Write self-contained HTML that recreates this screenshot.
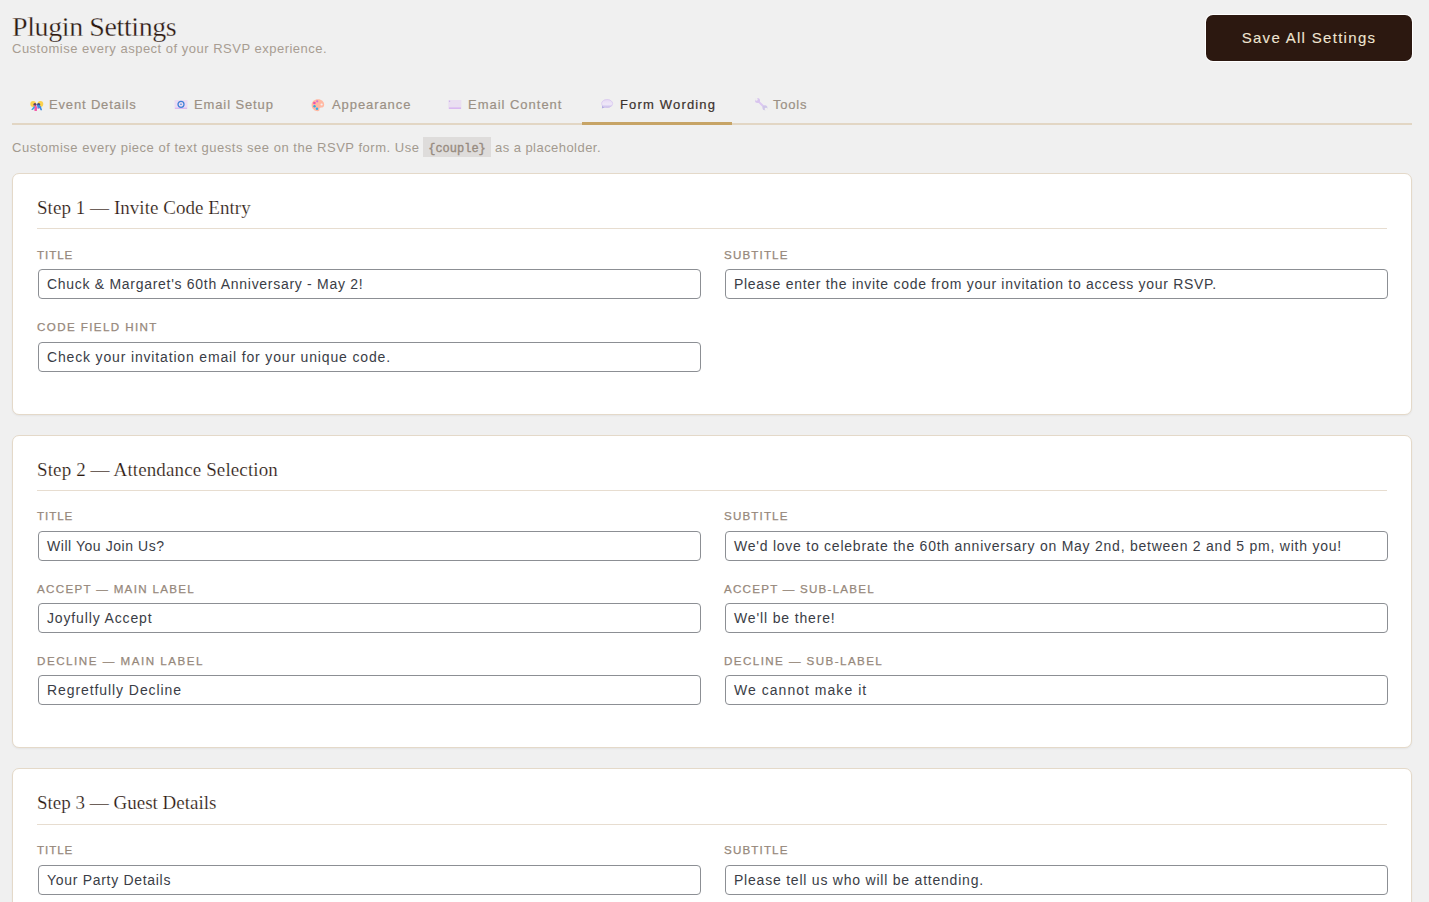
<!DOCTYPE html>
<html><head><meta charset="utf-8">
<style>
*{box-sizing:border-box;margin:0;padding:0}
html,body{width:1429px;height:902px;overflow:hidden;background:#f0f0f0}
body{font-family:"Liberation Sans",sans-serif;position:relative}
.a{position:absolute;white-space:nowrap}
.h1{left:12px;top:10px;font-family:"Liberation Serif",serif;font-size:28px;line-height:34px;color:#2c1810;letter-spacing:-0.4px;-webkit-text-stroke:0.3px #f0f0f0}
.sub{left:12px;top:41px;font-size:13px;line-height:16px;color:#a89d92;letter-spacing:0.5px}
.btn{left:1206px;top:15px;width:206px;height:46px;border-radius:7px;background:#2c1810;color:#efe4d2;font-size:15px;letter-spacing:1.3px;line-height:46px;text-align:center;box-shadow:0 0 0 1px #fff;-webkit-text-stroke:0.1px #efe4d2}
.tabline{left:12px;top:123px;width:1400px;height:2px;background:#e2d6c4}
.active{left:582px;top:122px;width:150px;height:3px;background:#c7a466}
.tt{top:97px;font-size:13px;line-height:16px;color:#9b9085;-webkit-text-stroke:0.2px #9b9085}
.tt.on{color:#3b322d;-webkit-text-stroke:0.2px #3b322d}
.ic{position:absolute}
.desc{left:12px;top:140px;font-size:13px;line-height:16px;color:#a39a8f;letter-spacing:0.515px}
.code{left:423px;top:137px;width:68px;height:20px;background:#dedcdb;font-family:"Liberation Mono",monospace;font-size:12px;line-height:20px;padding-top:2px;color:#978b7f;text-align:center;-webkit-text-stroke:0.35px #978b7f}
.card{position:absolute;left:12px;width:1400px;background:#fff;border:1px solid #e4d9c9;border-radius:7px;box-shadow:0 1px 2px rgba(0,0,0,0.05)}
.ct{position:absolute;left:24px;font-family:"Liberation Serif",serif;font-size:19px;line-height:24px;color:#2c1810;white-space:nowrap;-webkit-text-stroke:0.2px #fff}
.sep{position:absolute;left:24px;width:1350px;height:1px;background:#e7ddd0}
.lbl{position:absolute;font-size:11.6px;line-height:14px;color:#96887b;white-space:nowrap;-webkit-text-stroke:0.25px #96887b}
.inp{position:absolute;width:663px;height:30px;border:1px solid #8c8f94;border-radius:4px;font-size:14px;line-height:28px;padding-left:8px;color:#3a3d46;white-space:nowrap;overflow:hidden;-webkit-text-stroke:0px #3c434a}
.L{left:24px}.R{left:711px}
.iL{left:25px}.iR{left:712px}
</style></head><body>
<div class="a h1">Plugin Settings</div>
<div class="a sub">Customise every aspect of your RSVP experience.</div>
<div class="a btn">Save All Settings</div>

<div class="a tabline"></div>
<div class="a active"></div>

<!-- icons -->
<svg class="ic" style="left:30px;top:100px" width="14" height="12" viewBox="0 0 14 12">
 <circle cx="3.2" cy="4" r="2.9" fill="#fbd24e"/>
 <circle cx="10.4" cy="4" r="2.9" fill="#fbd24e"/>
 <circle cx="5" cy="4.6" r="1.6" fill="#5a3e62"/>
 <circle cx="8.6" cy="4.6" r="1.6" fill="#3b4a82"/>
 <path d="M4 5.2 Q6.4 4.8 7.1 7 L6.9 11 L4.5 11 Z" fill="#f25aa8"/>
 <path d="M4 6 L1.2 9.8 L2.9 10 L5 7.6 Z" fill="#3aa2e6"/>
 <path d="M7 5 Q9.6 4.4 11 6.4 L12.1 10.2 L10.5 10.2 L9.8 8.2 L7.6 8.6 Z" fill="#3a8ae0"/>
 <circle cx="8.4" cy="8.4" r="0.7" fill="#e070d0"/>
</svg>
<svg class="ic" style="left:174px;top:99px" width="14" height="11" viewBox="0 0 14 11">
 <rect x="0.5" y="1" width="13" height="9" fill="#ecdcf2"/>
 <rect x="1" y="8.6" width="12" height="1.4" fill="#dab8f0"/>
 <circle cx="7" cy="5.3" r="3" fill="none" stroke="#3f80d8" stroke-width="1.3"/>
 <circle cx="7" cy="5.3" r="0.8" fill="#3f80d8"/>
</svg>
<svg class="ic" style="left:311px;top:98px" width="14" height="14" viewBox="0 0 14 14">
 <path d="M7 1.2 C10.5 1.2 13.2 3.6 13.2 6.8 C13.2 8.8 11.8 9.6 10.2 9.6 C8.8 9.6 8.2 10.4 8.4 11.6 C8.6 12.8 7.8 13.2 6.8 13.2 C3.4 13.2 0.6 10.4 0.6 7 C0.6 3.6 3.4 1.2 7 1.2 Z" fill="#ffb8a2"/>
 <circle cx="10.6" cy="6.5" r="1.1" fill="#f4f0f0"/>
 <circle cx="3.4" cy="5" r="1.3" fill="#f050a8"/>
 <circle cx="6.2" cy="3.3" r="1.1" fill="#d070d8"/>
 <circle cx="3.5" cy="8.3" r="1.2" fill="#38a8e0"/>
 <circle cx="6" cy="10.8" r="1.2" fill="#30b0ee"/>
</svg>
<svg class="ic" style="left:448px;top:99px" width="14" height="11" viewBox="0 0 14 11">
 <rect x="0.3" y="1" width="13" height="9" fill="#eadff1"/>
 <path d="M1 1.5 L6.5 6 L13 1.5" fill="none" stroke="#eae0f2" stroke-width="0.8"/><circle cx="1.6" cy="2.3" r="0.7" fill="#c9b2e6"/>
 <rect x="1" y="8.4" width="12" height="1.6" fill="#d9b8f0"/>
</svg>
<svg class="ic" style="left:600px;top:98px" width="14" height="12" viewBox="0 0 14 12">
 <defs><linearGradient id="bg1" x1="0" y1="0" x2="0" y2="1"><stop offset="0" stop-color="#e6d8f4"/><stop offset="0.6" stop-color="#efe8f8"/><stop offset="1" stop-color="#c0b4e6"/></linearGradient></defs>
 <path d="M2.2 7.6 L1.9 10.6 L5 9.2 Z" fill="#b2aae2"/>
 <ellipse cx="7.1" cy="5.5" rx="5.9" ry="4.3" fill="url(#bg1)"/>
 <ellipse cx="7.1" cy="5.5" rx="5.5" ry="3.9" fill="none" stroke="#d6c6ee" stroke-width="0.7"/>
</svg>
<svg class="ic" style="left:754px;top:97px" width="14" height="14" viewBox="0 0 14 14">
 <path d="M4.4 4.4 L10.2 10.2" stroke="#dcc8f2" stroke-width="2" stroke-linecap="round"/>
 <circle cx="3.5" cy="3.6" r="2.5" fill="#d8c4ee"/>
 <circle cx="2.4" cy="2.4" r="1.3" fill="#f0f0f0"/>
 <circle cx="10.9" cy="10.8" r="2.5" fill="#cfc6e8"/>
 <circle cx="12" cy="12" r="1.3" fill="#f0f0f0"/>
</svg>

<div class="a tt" style="left:49px;letter-spacing:0.84px">Event Details</div>
<div class="a tt" style="left:194px;letter-spacing:0.88px">Email Setup</div>
<div class="a tt" style="left:332px;letter-spacing:0.92px">Appearance</div>
<div class="a tt" style="left:468px;letter-spacing:0.98px">Email Content</div>
<div class="a tt on" style="left:620px;letter-spacing:1.17px">Form Wording</div>
<div class="a tt" style="left:773px;letter-spacing:0.8px">Tools</div>

<div class="a desc">Customise every piece of text guests see on the RSVP form. Use</div>
<div class="a code">{couple}</div>
<div class="a desc" style="left:495px;letter-spacing:0.45px">as a placeholder.</div>

<div class="card" style="top:173px;height:242px">
 <div class="ct" style="top:21.5px;letter-spacing:0.04px">Step 1 — Invite Code Entry</div>
 <div class="sep" style="top:54px"></div>
 <div class="lbl L" style="top:74px;letter-spacing:0.93px">TITLE</div>
 <div class="inp iL" style="top:95px;letter-spacing:0.71px">Chuck &amp; Margaret's 60th Anniversary - May 2!</div>
 <div class="lbl R" style="top:74px;letter-spacing:1.15px">SUBTITLE</div>
 <div class="inp iR" style="top:95px;letter-spacing:0.71px">Please enter the invite code from your invitation to access your RSVP.</div>
 <div class="lbl L" style="top:146px;letter-spacing:1.4px">CODE FIELD HINT</div>
 <div class="inp iL" style="top:168px;letter-spacing:0.84px">Check your invitation email for your unique code.</div>
</div>

<div class="card" style="top:435px;height:313px">
 <div class="ct" style="top:21.5px;letter-spacing:0.12px">Step 2 — Attendance Selection</div>
 <div class="sep" style="top:54px"></div>
 <div class="lbl L" style="top:73px;letter-spacing:0.93px">TITLE</div>
 <div class="inp iL" style="top:95px;letter-spacing:0.55px">Will You Join Us?</div>
 <div class="lbl R" style="top:73px;letter-spacing:1.15px">SUBTITLE</div>
 <div class="inp iR" style="top:95px;letter-spacing:0.76px">We'd love to celebrate the 60th anniversary on May 2nd, between 2 and 5 pm, with you!</div>
 <div class="lbl L" style="top:146px;letter-spacing:1.31px">ACCEPT — MAIN LABEL</div>
 <div class="inp iL" style="top:167px;letter-spacing:0.86px">Joyfully Accept</div>
 <div class="lbl R" style="top:146px;letter-spacing:1.24px">ACCEPT — SUB-LABEL</div>
 <div class="inp iR" style="top:167px;letter-spacing:0.85px">We'll be there!</div>
 <div class="lbl L" style="top:218px;letter-spacing:1.52px">DECLINE — MAIN LABEL</div>
 <div class="inp iL" style="top:239px;letter-spacing:0.92px">Regretfully Decline</div>
 <div class="lbl R" style="top:218px;letter-spacing:1.43px">DECLINE — SUB-LABEL</div>
 <div class="inp iR" style="top:239px;letter-spacing:1.03px">We cannot make it</div>
</div>

<div class="card" style="top:768px;height:200px">
 <div class="ct" style="top:22px">Step 3 — Guest Details</div>
 <div class="sep" style="top:55px"></div>
 <div class="lbl L" style="top:74px;letter-spacing:0.93px">TITLE</div>
 <div class="inp iL" style="top:96px;letter-spacing:0.7px">Your Party Details</div>
 <div class="lbl R" style="top:74px;letter-spacing:1.15px">SUBTITLE</div>
 <div class="inp iR" style="top:96px;letter-spacing:0.78px">Please tell us who will be attending.</div>
</div>
</body></html>
